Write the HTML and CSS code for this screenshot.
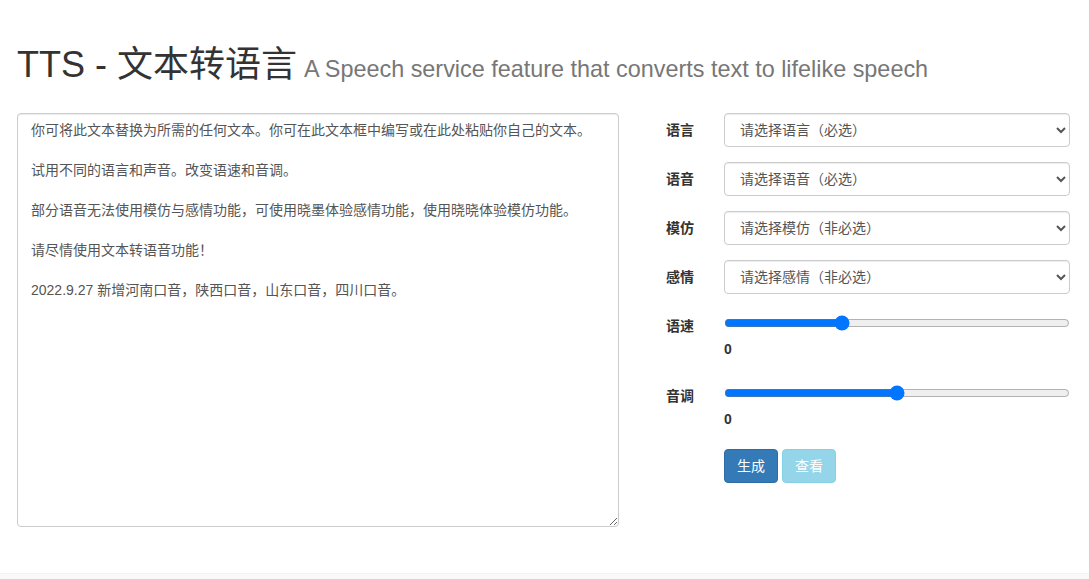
FILE: index.html
```html
<!DOCTYPE html>
<html lang="zh-CN">
<head>
<meta charset="utf-8">
<title>TTS - 文本转语言</title>
<link rel="stylesheet" href="styles.css">
</head>
<body>
<div class="container">
  <h1 class="title">TTS - 文本转语言 <small>A Speech service feature that converts text to lifelike speech</small></h1>
  <div class="main">
    <div class="left">
      <textarea class="text-input">你可将此文本替换为所需的任何文本。你可在此文本框中编写或在此处粘贴你自己的文本。

试用不同的语言和声音。改变语速和音调。

部分语音无法使用模仿与感情功能，可使用晓墨体验感情功能，使用晓晓体验模仿功能。

请尽情使用文本转语音功能！

2022.9.27 新增河南口音，陕西口音，山东口音，四川口音。</textarea>
    </div>
    <form class="right">
      <div class="group">
        <label class="label">语言</label>
        <div class="control"><select class="select"><option>请选择语言（必选）</option></select></div>
      </div>
      <div class="group">
        <label class="label">语音</label>
        <div class="control"><select class="select"><option>请选择语音（必选）</option></select></div>
      </div>
      <div class="group">
        <label class="label">模仿</label>
        <div class="control"><select class="select"><option>请选择模仿（非必选）</option></select></div>
      </div>
      <div class="group">
        <label class="label">感情</label>
        <div class="control"><select class="select"><option>请选择感情（非必选）</option></select></div>
      </div>
      <div class="group slider-group">
        <label class="label">语速</label>
        <div class="control">
          <input class="range" type="range" min="0" max="3" step="0.01" value="1">
          <div class="value">0</div>
        </div>
      </div>
      <div class="group slider-group">
        <label class="label">音调</label>
        <div class="control">
          <input class="range" type="range" min="0" max="2" step="0.01" value="1">
          <div class="value">0</div>
        </div>
      </div>
      <div class="group buttons">
        <div class="label"></div>
        <div class="control btn-row">
          <button type="button" class="btn btn-primary">生成</button>
          <button type="button" class="btn btn-info" disabled>查看</button>
        </div>
      </div>
    </form>
  </div>
</div>
<div class="footer"></div>
</body>
</html>
```

FILE: styles.css
```css
html, body {
  margin: 0;
  padding: 0;
  background: #fff;
}
body {
  font-family: "Liberation Sans", "Noto Sans CJK SC", sans-serif;
  font-size: 14px;
  line-height: 20px;
  color: #333;
  height: 579px;
  display: flex;
  flex-direction: column;
  overflow: hidden;
}
.container {
  padding: 0 19px 0 17px;
  flex: 1;
}
.title {
  margin: 45px 0 24px;
  font-size: 36px;
  line-height: 40px;
  font-weight: 400;
  color: #333;
  font-family: "Liberation Sans", "Noto Sans CJK SC", sans-serif;
}
.title small {
  font-size: 23.4px;
  color: #777;
  font-weight: 400;
  margin-left: -3px;
}
.main {
  display: flex;
  gap: 46px;
}
.left {
  width: 602px;
  flex: none;
}
.text-input {
  display: block;
  box-sizing: border-box;
  width: 602px;
  height: 414px;
  margin: 0;
  padding: 6px 13px;
  border: 1px solid #ccc;
  border-radius: 4px;
  box-shadow: inset 0 1px 1px rgba(0,0,0,.075);
  font-family: "Liberation Sans", "Noto Sans CJK SC", sans-serif;
  font-size: 14px;
  line-height: 20px;
  color: #555;
  background: #fff;
  resize: both;
  overflow: hidden;
}
.right {
  flex: 1;
  margin: 0;
}
.group {
  display: flex;
  margin-bottom: 15px;
}
.label {
  box-sizing: border-box;
  width: 59px;
  flex: none;
  font-weight: 700;
  padding-top: 7px;
  padding-left: 1px;
  color: #333;
}
.control {
  flex: 1;
}
.select {
  display: block;
  box-sizing: border-box;
  width: 100%;
  height: 34px;
  padding: 6px 8px 6px 11px;
  border: 1px solid #ccc;
  border-radius: 4px;
  box-shadow: inset 0 1px 1px rgba(0,0,0,.075);
  background: #fff;
  font-family: "Liberation Sans", "Noto Sans CJK SC", sans-serif;
  font-size: 14px;
  color: #555;
}
.slider-group {
  margin-bottom: 20px;
}
.range {
  display: block;
  width: 100%;
  margin: 6px 0 0;
  height: 16px;
  accent-color: #0075ff;
}
.value {
  margin-top: 8px;
  font-weight: 700;
  line-height: 20px;
}
.buttons {
  margin-bottom: 0;
}
.btn-row {
  display: flex;
  gap: 4px;
}
.btn {
  box-sizing: border-box;
  height: 34px;
  padding: 6px 12px;
  border: 1px solid transparent;
  border-radius: 4px;
  font-family: "Liberation Sans", "Noto Sans CJK SC", sans-serif;
  font-size: 14px;
  line-height: 20px;
  color: #fff;
  cursor: pointer;
}
.btn-primary {
  background: #337ab7;
  border-color: #2e6da4;
}
.btn-info {
  background: #5bc0de;
  border-color: #46b8da;
  opacity: .65;
  cursor: not-allowed;
}
.footer {
  height: 5px;
  flex: none;
  background: #f9f9f9;
  border-top: 1px solid #f3f3f3;
}
```
